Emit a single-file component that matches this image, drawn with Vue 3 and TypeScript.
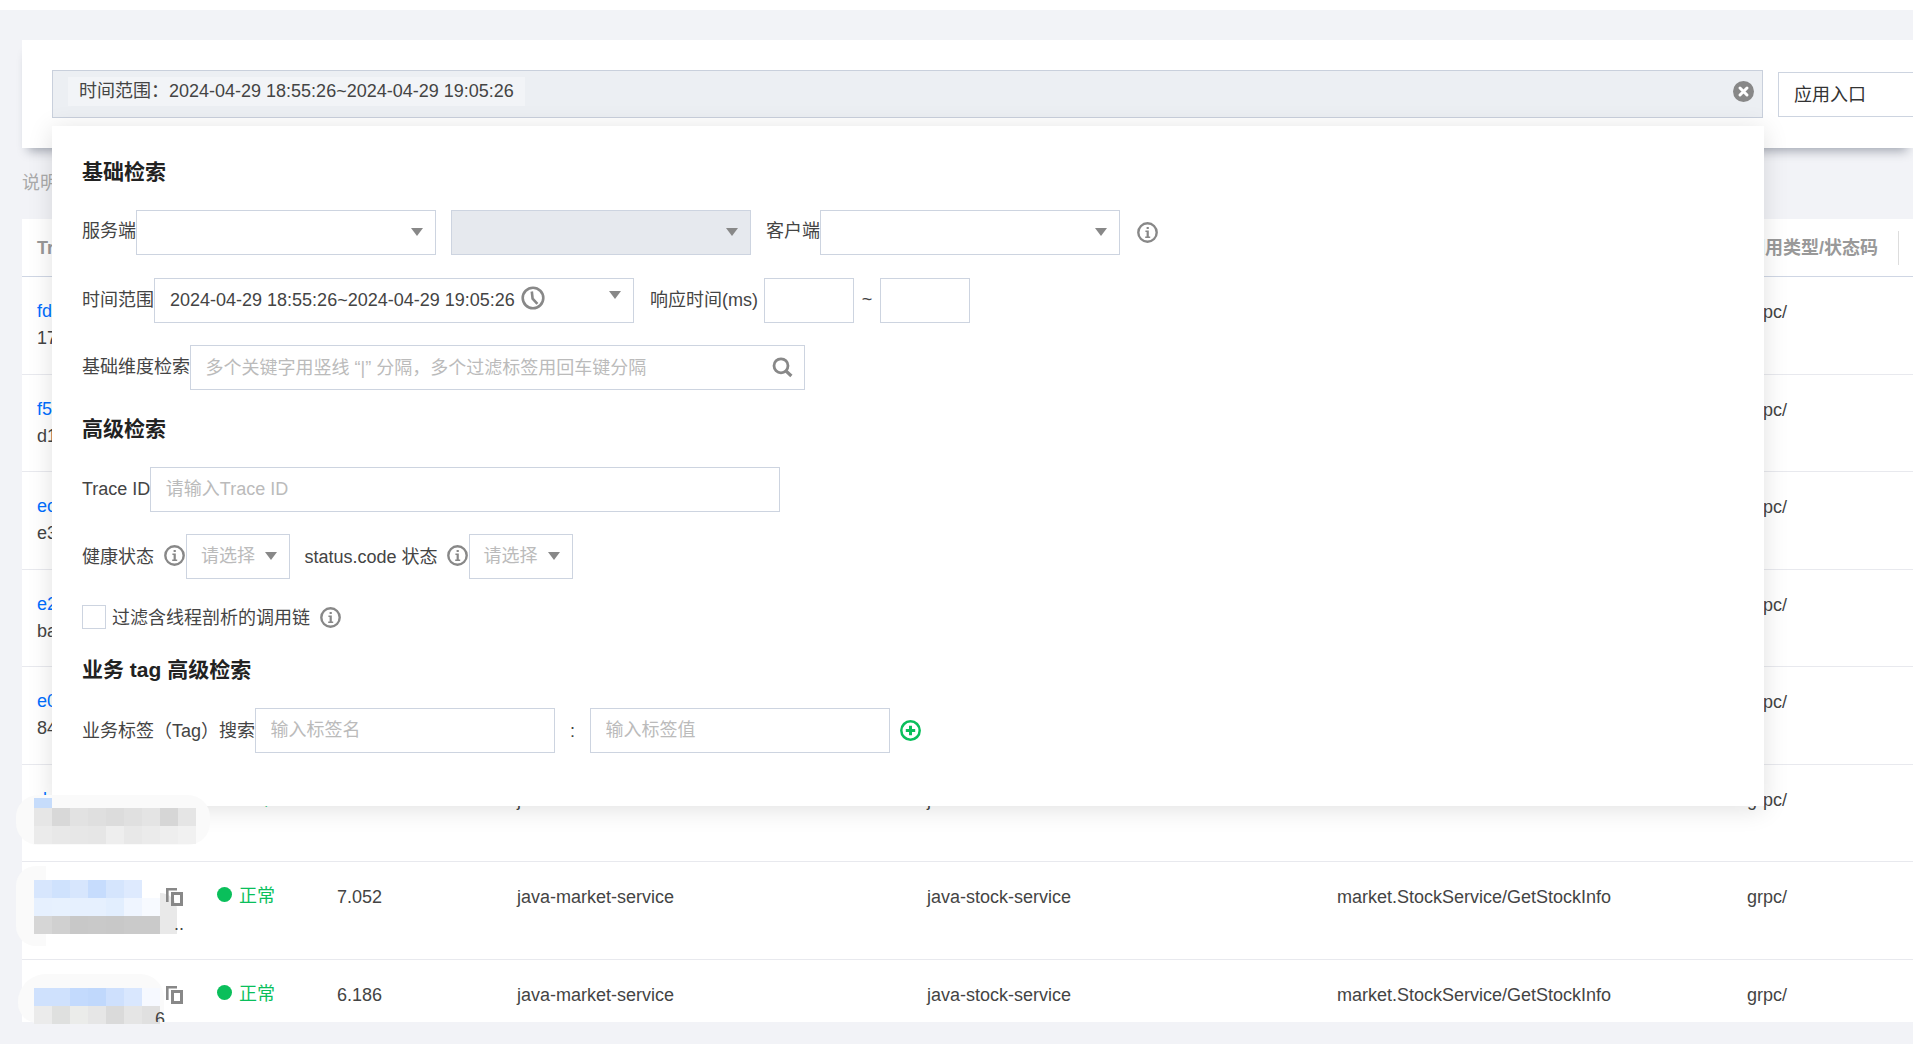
<script setup lang="ts">
interface TraceRow {
  id: string;
  sub: string;
  tail?: boolean;
  duration: string;
}

interface Mosaic {
  row: number;
  left: number;
  top: number;
  heights: number[];
  cells: string[][];
}

const columns = ['Trace ID', '状态', '耗时(ms)', '服务端', '客户端', '接口', '调用类型/状态码'];

const rows: TraceRow[] = [
  { id: 'fd93a7c2e41', sub: '1714388126', duration: '9.418' },
  { id: 'f52e80b6cd1', sub: 'd1f0a7c39e', duration: '8.733' },
  { id: 'ec714d09ba3', sub: 'e3a96b0c17', duration: '8.260' },
  { id: 'e2c06f18d95', sub: 'ba47e1f02d', duration: '7.941' },
  { id: 'e0b35a7c19d', sub: '84c1f0a2b7', duration: '7.615' },
  { id: 'de61f0b37a9', sub: '', duration: '7.308' },
  { id: '', sub: '..', tail: true, duration: '7.052' },
  { id: '', sub: '.6', tail: true, duration: '6.186' },
];

const mosaics: Mosaic[] = [
  {
    row: 5,
    left: 12,
    top: 33.5,
    heights: [10, 18, 18],
    cells: [
      ['#c6dcfb'],
      ['#e6e6e6', '#d8d8d8', '#e2e2e2', '#dfdfdf', '#dcdcdc', '#e0e0e0', '#e4e4e4', '#d6d6d6', '#e5e5e5'],
      ['#ebebeb', '#e8e8e8', '#e7e7e7', '#e6e6e6', '#eeeeee', '#e8e8e8', '#ebebeb', '#eeeeee', '#f1f1f1'],
    ],
  },
  {
    row: 6,
    left: 12,
    top: 18,
    heights: [18, 18, 18],
    cells: [
      ['#d7e6fd', '#cfe2fd', '#d7e6fd', '#c6dcfd', '#d5e5fd', '#deeafe'],
      ['#e6f0fe', '#e7f1fe', '#e6f0fe', '#e6f0fe', '#e2eefe', '#eff5ff', '#f7faff'],
      ['#d6d6d6', '#d0d0d0', '#c8c8c8', '#c9c9c9', '#c8c8c8', '#cacaca', '#cacaca'],
    ],
  },
  {
    row: 7,
    left: 12,
    top: 28.5,
    heights: [18, 18],
    cells: [
      ['#cfe1fd', '#cfe1fd', '#c3dafd', '#c0d8fc', '#cee0fd', '#d9e7fe', '#f6f9ff'],
      ['#ebebeb', '#dfe0df', '#ebecea', '#e6e6e6', '#dadada', '#e5e5e5', '#e0e0e0'],
    ],
  },
];

const mosaicFor = (i: number) => mosaics.find((m) => m.row === i);
const cellList = (m: Mosaic) => m.cells.flatMap((line, y) => line.map((color, x) => ({ color, x, y })));
</script>

<template>
  <div class="shell">
    <svg class="defs" aria-hidden="true">
      <symbol id="i-info" viewBox="0 0 21 21">
        <circle cx="10.5" cy="10.5" r="9.2" fill="none" stroke="#888" stroke-width="2.4" />
        <path d="M8.4 8.6h3.4v6h1.4v1.4H8.2v-1.4h1.4V10H8.4zM9.6 4.9h2.2v2.2H9.6z" fill="#888" />
      </symbol>
      <symbol id="i-copy" viewBox="0 0 17 18">
        <path d="M0 0h11v2.6H2.6V14H0z" fill="#888" />
        <path d="M5 4h12v14H5zM8 7v8h6V7z" fill="#888" fill-rule="evenodd" />
      </symbol>
    </svg>

    <div class="band"></div>

    <div class="page">
      <section class="filter-card">
        <div class="filter-bar">
          <span class="tag">时间范围：2024-04-29 18:55:26~2024-04-29 19:05:26</span>
          <svg class="clear" width="21" height="21" viewBox="0 0 21 21">
            <circle cx="10.5" cy="10.5" r="10.5" fill="#888" />
            <path d="M7 7l7 7M14 7l-7 7" stroke="#fff" stroke-width="3" stroke-linecap="round" />
          </svg>
        </div>
        <div class="entry">应用入口</div>
      </section>

      <p class="note">说明</p>

      <section class="table">
        <div class="grid head">
          <div v-for="col in columns" :key="col" class="th">{{ col }}</div>
        </div>
        <div v-for="(row, i) in rows" :key="i" class="row-wrap" :class="{ last: i === rows.length - 1 }">
          <div class="grid row">
            <div class="td id-cell">
              <div class="id-line">
                <a class="link">{{ row.id }}</a>
                <svg class="copy" :class="{ over: row.tail }"><use href="#i-copy" /></svg>
              </div>
              <div class="sub" :class="{ 'tail-dots': row.tail && i === 6, 'tail-num': row.tail && i === 7 }">{{ row.sub }}</div>
            </div>
            <div class="td status"><i class="dot"></i>正常</div>
            <div class="td">{{ row.duration }}</div>
            <div class="td">java-market-service</div>
            <div class="td">java-stock-service</div>
            <div class="td">market.StockService/GetStockInfo</div>
            <div class="td last-col">grpc/</div>
          </div>
          <template v-if="mosaicFor(i)">
            <div class="smudge" :class="'smudge-' + i"></div>
            <div
              class="mosaic"
              :style="{
                left: mosaicFor(i)!.left + 'px',
                top: mosaicFor(i)!.top + 'px',
                gridTemplateRows: mosaicFor(i)!.heights.map((h) => h + 'px').join(' '),
              }"
            >
              <span
                v-for="c in cellList(mosaicFor(i)!)"
                :key="c.x + '-' + c.y"
                :style="{ background: c.color, gridColumn: c.x + 1, gridRow: c.y + 1 }"
              ></span>
            </div>
            <div v-if="i === 6" class="smudge-end"></div>
          </template>
        </div>
      </section>

      <section class="popup">
        <h3 class="title">基础检索</h3>

        <div class="line gap-23">
          <label class="up2">服务端</label>
          <div class="select w300"><b class="arrow"></b></div>
          <div class="select w300 disabled ml15"><b class="arrow"></b></div>
          <label class="ml15 up2">客户端</label>
          <div class="select w300"><b class="arrow"></b></div>
          <svg class="info big-gap"><use href="#i-info" /></svg>
        </div>

        <div class="line gap-23">
          <label class="up1">时间范围</label>
          <div class="select w480 time">
            <span class="value up1">2024-04-29 18:55:26~2024-04-29 19:05:26</span>
            <svg class="clock" width="24" height="24" viewBox="0 0 24 24">
              <circle cx="12" cy="12" r="10.3" fill="none" stroke="#888" stroke-width="2.6" />
              <path d="M10.8 5.5l.8 7.2 4.8 5.2" fill="none" stroke="#888" stroke-width="2.6" />
            </svg>
            <b class="arrow up"></b>
          </div>
          <label class="ml16 up1">响应时间(ms)</label>
          <input class="input w90 ml6" type="text" />
          <span class="tilde">~</span>
          <input class="input w90" type="text" />
        </div>

        <div class="line gap-22">
          <label class="up1">基础维度检索</label>
          <div class="search">
            <input class="input w615 low" type="text" placeholder="多个关键字用竖线 “|” 分隔，多个过滤标签用回车键分隔" />
            <svg class="search-icon" width="21" height="21" viewBox="0 0 21 21">
              <circle cx="9" cy="8.8" r="7" fill="none" stroke="#888" stroke-width="2.8" />
              <path d="M14 14l5.4 5" stroke="#888" stroke-width="3.2" />
            </svg>
          </div>
        </div>

        <h3 class="title gap-24">高级检索</h3>

        <div class="line gap-23">
          <label class="up1">Trace ID</label>
          <input class="input w630" type="text" placeholder="请输入Trace ID" />
        </div>

        <div class="line gap-22">
          <label>健康状态</label>
          <svg class="info tip-a"><use href="#i-info" /></svg>
          <div class="select small"><span class="hint">请选择</span><b class="arrow"></b></div>
          <label class="ml14">status.code 状态</label>
          <svg class="info tip-b"><use href="#i-info" /></svg>
          <div class="select small"><span class="hint">请选择</span><b class="arrow"></b></div>
        </div>

        <div class="check-line">
          <span class="box"></span>
          <label class="down1">过滤含线程剖析的调用链</label>
          <svg class="info tip-c"><use href="#i-info" /></svg>
        </div>

        <h3 class="title gap-26">业务 tag 高级检索</h3>

        <div class="line gap-23">
          <label>业务标签（Tag）搜索</label>
          <input class="input w300" type="text" placeholder="输入标签名" />
          <span class="colon">:</span>
          <input class="input w300" type="text" placeholder="输入标签值" />
          <svg class="add" width="21" height="21" viewBox="0 0 21 21">
            <circle cx="10.5" cy="10.5" r="9.2" fill="none" stroke="#0abf5b" stroke-width="2.5" />
            <path d="M10.5 5.8v9.4M5.8 10.5h9.4" stroke="#0abf5b" stroke-width="3" />
          </svg>
        </div>
      </section>
    </div>
  </div>
</template>

<style>
html,
body {
  margin: 0;
  background: #f2f3f7;
  overflow: hidden;
}
</style>

<style scoped>
.shell {
  width: 1913px;
  height: 1044px;
  overflow: hidden;
  font: 18px/26px "Liberation Sans", "Noto Sans CJK SC", sans-serif;
  color: #444;
}

.defs {
  position: absolute;
  width: 0;
  height: 0;
}

.band {
  height: 10px;
  background: #fff;
}

.page {
  position: relative;
  height: 1034px;
  box-sizing: border-box;
  padding: 30px 0 0 22px;
  background: #f2f3f7;
}

.filter-card {
  display: flex;
  align-items: center;
  gap: 15px;
  height: 108px;
  box-sizing: border-box;
  padding-left: 30px;
  background: #fff;
  box-shadow: 0 9px 10px -6px rgba(40, 50, 70, 0.4);
  position: relative;
}

.filter-bar {
  display: flex;
  flex: none;
  align-items: center;
  justify-content: space-between;
  width: 1711px;
  height: 48px;
  box-sizing: border-box;
  padding: 0 8px 0 15px;
  border: 1px solid #c9d0dc;
  background: #eceff3;
}

.tag {
  margin-top: -6px;
  padding: 1px 11px 2px 11px;
  line-height: 26px;
  background: #f2f4f7;
  white-space: nowrap;
}

.clear {
  margin-top: -5px;
}

.entry {
  flex: none;
  width: 300px;
  height: 45px;
  box-sizing: border-box;
  padding: 9px 15px;
  border: 1px solid #cdd4e0;
  color: #333;
}

.note {
  height: 71px;
  box-sizing: border-box;
  margin: 0;
  padding-top: 22px;
  color: #aaa;
}

.table {
  background: #fff;
  height: 803px;
}

.grid {
  display: grid;
  grid-template-columns: 181px 120px 180px 410px 410px 409px 167px;
}

.head {
  height: 58px;
  box-sizing: border-box;
  border-bottom: 1px solid #cfd6e4;
  align-items: center;
}

.th {
  padding-left: 15px;
  font-weight: 700;
  color: #999;
  white-space: nowrap;
}

.th:last-child {
  height: 34px;
  line-height: 34px;
  border-right: 1px solid #ddd;
}

.row-wrap {
  position: relative;
  height: 97.5px;
  box-sizing: border-box;
  border-bottom: 1px solid #e8e9ee;
}

.row-wrap.last {
  height: 62.5px;
  border-bottom: none;
}

.row {
  height: 100%;
  overflow: hidden;
}

.td {
  padding: 22px 0 0 14px;
  white-space: nowrap;
}

.td.last-col {
  padding-left: 15px;
}

.id-cell {
  min-width: 0;
  padding-left: 15px;
}

.id-line {
  display: flex;
  align-items: center;
  height: 26px;
}

.link {
  flex: none;
  width: 105px;
  margin: -2px 24px 0 0;
  overflow: hidden;
  color: #006eff;
}

.copy {
  flex: none;
  width: 17px;
  height: 18px;
}

.copy.over {
  position: relative;
  z-index: 12;
}

.sub {
  height: 26px;
  overflow: hidden;
}

.tail-dots,
.tail-num {
  position: relative;
  z-index: 12;
  text-align: right;
}

.tail-dots {
  width: 147px;
  margin-top: 1px;
}

.tail-num {
  width: 128px;
  margin-top: -2px;
}

.status {
  display: flex;
  align-items: flex-start;
  padding-top: 21px;
  color: #0abf5b;
}

.dot {
  flex: none;
  width: 15px;
  height: 15px;
  margin: 4px 7px 0 0;
  border-radius: 50%;
  background: #0abf5b;
}

.smudge,
.mosaic,
.smudge-end {
  position: absolute;
  z-index: 11;
}

.mosaic {
  display: grid;
  grid-template-columns: repeat(9, 18px);
}

.smudge {
  background: #fafafa;
}

.smudge-5 {
  left: -6px;
  top: 30px;
  width: 194px;
  height: 50px;
  border-radius: 22px;
}

.smudge-6 {
  left: -6px;
  top: 4px;
  width: 30px;
  height: 80px;
  border-radius: 20px 0 0 20px;
}

.smudge-7 {
  left: -4px;
  top: 14px;
  width: 146px;
  height: 49px;
  border-radius: 28px 24px 0 20px;
}

.smudge-end {
  left: 138px;
  top: 31px;
  width: 17px;
  height: 41px;
  background: #e9e9e9;
  border-radius: 0 18px 0 0;
}

.popup {
  position: absolute;
  z-index: 10;
  left: 52px;
  top: 116px;
  width: 1712px;
  height: 680px;
  box-sizing: border-box;
  padding: 31px 0 0 30px;
  background: #fff;
  box-shadow: 0 3px 24px rgba(0, 0, 0, 0.12);
}

.title {
  margin: 0;
  font-size: 21px;
  line-height: 30px;
  font-weight: 700;
  color: #222;
}

.line {
  display: flex;
  align-items: center;
  height: 45px;
}

.line label,
.check-line label {
  flex: none;
  white-space: nowrap;
}

.up1 {
  margin-top: -2px;
}

.up2 {
  margin-top: -4px;
}

.down1 {
  margin-top: 2px;
}

.gap-22 {
  margin-top: 22px;
}

.gap-23 {
  margin-top: 23px;
}

.gap-24 {
  margin-top: 24px;
}

.gap-26 {
  margin-top: 26px;
}

.ml6 {
  margin-left: 6px;
}

.ml14 {
  margin-left: 14.5px;
}

.ml15 {
  margin-left: 15px;
}

.ml16 {
  margin-left: 16px;
}

.select,
.input {
  flex: none;
  height: 45px;
  box-sizing: border-box;
  border: 1px solid #cdd4e0;
  background: #fff;
}

.select {
  display: flex;
  align-items: center;
  justify-content: flex-end;
  padding: 0 12px 0 15px;
}

.w90 {
  width: 90px;
}

.w300 {
  width: 300px;
}

.w480 {
  width: 480px;
}

.w615 {
  width: 615px;
}

.w630 {
  width: 630px;
}

.disabled {
  background: #e6e9ee;
}

.arrow {
  flex: none;
  width: 0;
  height: 0;
  margin-top: -1px;
  border-style: solid;
  border-width: 8px 6px 0 6px;
  border-color: #888 transparent transparent transparent;
}

.arrow.up {
  margin-top: -12px;
  margin-left: auto;
}

.time {
  justify-content: flex-start;
}

.value {
  white-space: nowrap;
}

.clock {
  flex: none;
  margin: -6px 0 0 6px;
}

.input {
  padding: 0 14.5px;
  font: inherit;
  color: #444;
  outline: none;
  border-radius: 0;
}

.input.low {
  padding-top: 2px;
}

.input::placeholder {
  color: #bbb;
  opacity: 1;
}

.search {
  position: relative;
}

.search-icon {
  position: absolute;
  right: 12px;
  top: 12px;
}

.info {
  flex: none;
  width: 21px;
  height: 21px;
}

.big-gap {
  margin-left: 16.5px;
}

.tip-a {
  margin: -2px 1.5px 0 9.5px;
}

.tip-b {
  margin: -2px 0.5px 0 9.5px;
}

.tip-c {
  margin-left: 9.5px;
}

.small {
  width: 104px;
  justify-content: space-between;
  padding-left: 14px;
}

.hint {
  color: #bbb;
  margin-top: -1px;
}

.tilde {
  flex: none;
  width: 26px;
  text-align: center;
  margin-top: -3px;
}

.colon {
  flex: none;
  width: 35px;
  text-align: center;
}

.add {
  flex: none;
  margin-left: 9.5px;
}

.check-line {
  display: flex;
  align-items: center;
  height: 24px;
  margin-top: 26px;
}

.box {
  flex: none;
  width: 24px;
  height: 24px;
  box-sizing: border-box;
  margin-right: 6px;
  border: 1px solid #cdd4e0;
}
</style>
